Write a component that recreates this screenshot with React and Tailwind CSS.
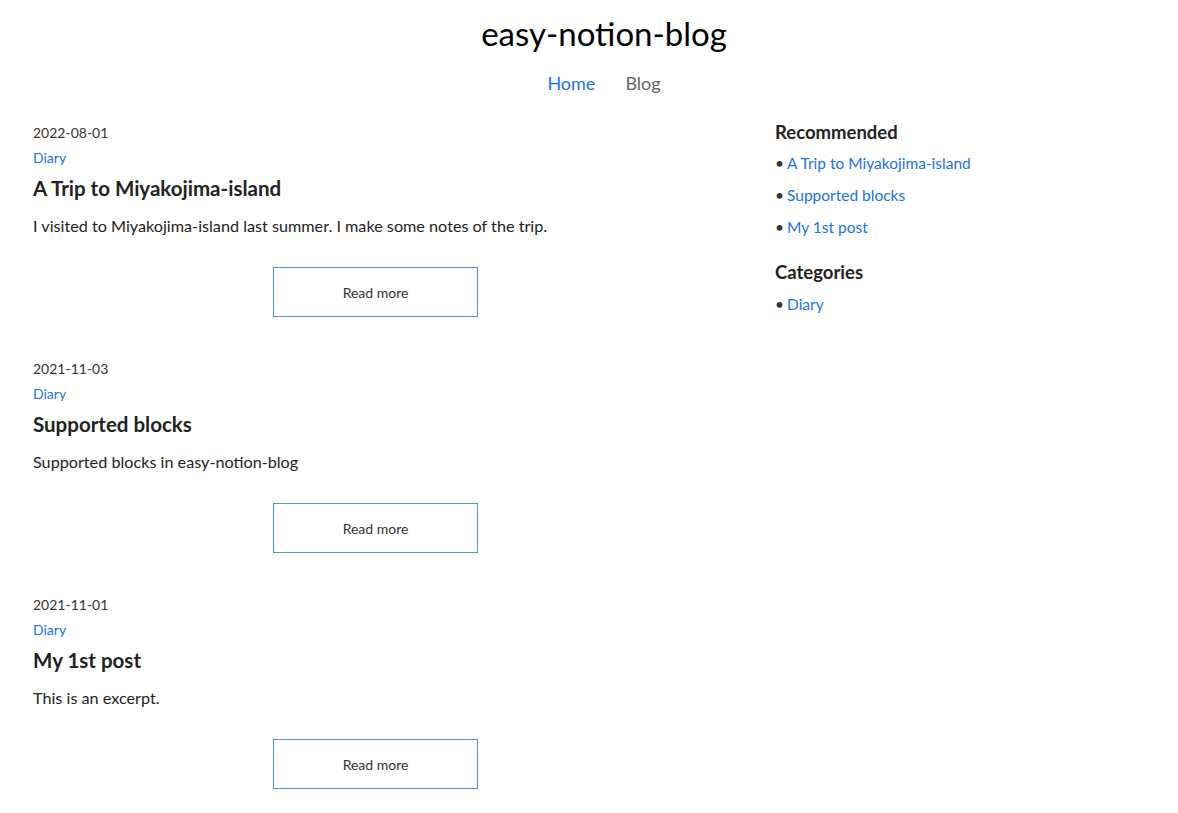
const POSTS = [
  {
    date: "2022-08-01",
    tag: "Diary",
    title: "A Trip to Miyakojima-island",
    excerpt: "I visited to Miyakojima-island last summer. I make some notes of the trip.",
  },
  {
    date: "2021-11-03",
    tag: "Diary",
    title: "Supported blocks",
    excerpt: "Supported blocks in easy-notion-blog",
  },
  {
    date: "2021-11-01",
    tag: "Diary",
    title: "My 1st post",
    excerpt: "This is an excerpt.",
  },
];

const RECOMMENDED = ["A Trip to Miyakojima-island", "Supported blocks", "My 1st post"];

function PostCard({ post }) {
  return (
    <div className="mb-[42px]">
      <div className="text-[14px] leading-[20px] text-[#333]">{post.date}</div>
      <div className="mt-[5px] text-[14px] leading-[20px] text-[#1a73e8]">{post.tag}</div>
      <h3 className="mt-[8px] text-[20.5px] font-bold leading-[24px] text-[#222]">{post.title}</h3>
      <p className="mt-[14px] text-[16.2px] leading-[24px] text-[#222]">{post.excerpt}</p>
      <div className="mt-[29px] flex justify-center">
        <button
          type="button"
          className="h-[50px] w-[205px] border border-[#4a90e2] bg-white text-[14px] text-[#333]"
        >
          Read more
        </button>
      </div>
    </div>
  );
}

export default function App() {
  return (
    <div className="min-h-screen bg-white font-['Lato',sans-serif] text-[#222]">
      <header className="pl-[30px] pt-[12px] text-center">
        <h1 className="text-[33px] leading-[42px] text-black">easy-notion-blog</h1>
        <nav className="mt-[17px] flex justify-center gap-[30px] text-[18px] leading-[24px]">
          <a className="text-[#1a73e8]">Home</a>
          <a className="text-[#666]">Blog</a>
        </nav>
      </header>

      <div className="mt-[28px] flex px-[33px]">
        <main className="w-[685px]">
          {POSTS.map((post) => (
            <PostCard key={post.title} post={post} />
          ))}
        </main>

        <aside className="ml-[57px] -mt-[3px] flex-1">
          <h3 className="text-[18.5px] font-bold leading-[24px] text-[#222]">Recommended</h3>
          <ul className="mt-[9px]">
            {RECOMMENDED.map((title) => (
              <li key={title} className="mb-[12px] flex items-center text-[15.5px] leading-[20px]">
                <span className="mr-[3px] text-[#333]">•</span>
                <a className="text-[#1a73e8]">{title}</a>
              </li>
            ))}
          </ul>
          <h3 className="mt-[23px] text-[18.5px] font-bold leading-[24px] text-[#222]">Categories</h3>
          <ul className="mt-[10px]">
            <li className="flex items-center text-[15.5px] leading-[20px]">
              <span className="mr-[3px] text-[#333]">•</span>
              <a className="text-[#1a73e8]">Diary</a>
            </li>
          </ul>
        </aside>
      </div>
    </div>
  );
}
